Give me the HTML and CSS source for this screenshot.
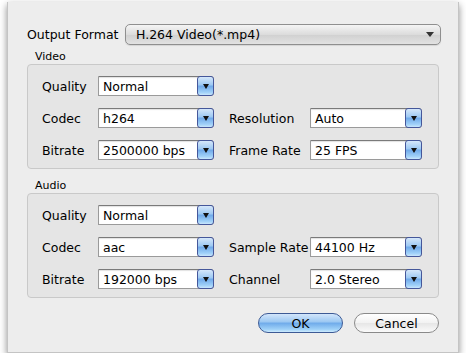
FILE: index.html
```html
<!DOCTYPE html>
<html lang="en">
<head>
    <meta charset="UTF-8">
    <title>Output Settings</title>
    <link rel="stylesheet" href="styles.css">
</head>
<body>
    <div class="window">
        <div class="format-row">
            <span class="label">Output Format</span>
            <div class="format-popup">
                <span>H.264 Video(*.mp4)</span>
                <span class="small-arrow"></span>
            </div>
        </div>

        <div class="group-title">Video</div>
        <div class="group">
            <span class="label">Quality</span>
            <div class="popup"><span class="value">Normal</span><span class="arrow"></span></div>
            <span></span><span></span>

            <span class="label">Codec</span>
            <div class="popup"><span class="value">h264</span><span class="arrow"></span></div>
            <span class="label">Resolution</span>
            <div class="popup"><span class="value">Auto</span><span class="arrow"></span></div>

            <span class="label">Bitrate</span>
            <div class="popup"><span class="value">2500000 bps</span><span class="arrow"></span></div>
            <span class="label">Frame Rate</span>
            <div class="popup"><span class="value">25 FPS</span><span class="arrow"></span></div>
        </div>

        <div class="group-title audio-title">Audio</div>
        <div class="group">
            <span class="label">Quality</span>
            <div class="popup"><span class="value">Normal</span><span class="arrow"></span></div>
            <span></span><span></span>

            <span class="label">Codec</span>
            <div class="popup"><span class="value">aac</span><span class="arrow"></span></div>
            <span class="label">Sample Rate</span>
            <div class="popup"><span class="value">44100 Hz</span><span class="arrow"></span></div>

            <span class="label">Bitrate</span>
            <div class="popup"><span class="value">192000 bps</span><span class="arrow"></span></div>
            <span class="label">Channel</span>
            <div class="popup"><span class="value">2.0 Stereo</span><span class="arrow"></span></div>
        </div>

        <div class="buttons">
            <button class="btn btn-default">OK</button>
            <button class="btn">Cancel</button>
        </div>
    </div>
</body>
</html>
```

FILE: styles.css
```css
* {
    margin: 0;
    padding: 0;
    box-sizing: border-box;
}

body {
    background: #ffffff;
    font-family: 'DejaVu Sans', sans-serif;
    font-size: 12.5px;
    color: #000;
}

.window {
    margin: 2px 0 0 7px;
    width: 452px;
    height: 351px;
    background: #ededed;
    border: 1px solid #c4c4c4;
    border-top: none;
    box-shadow: 0 3px 7px rgba(0, 0, 0, 0.45);
    padding: 22px 0 0 19px;
}

.label {
    white-space: nowrap;
}

.format-row {
    display: flex;
    align-items: center;
    height: 21px;
}

.format-row .label {
    width: 98px;
}

.format-popup {
    width: 316px;
    height: 21px;
    border: 1px solid #8f8f8f;
    border-radius: 5px;
    background: linear-gradient(#f4f4f4, #dcdcdc 50%, #d0d0d0 51%, #e2e2e2);
    display: flex;
    align-items: center;
    justify-content: space-between;
    padding: 0 6px 0 10px;
    box-shadow: 0 1px 1px rgba(0, 0, 0, 0.1);
}

.small-arrow {
    width: 0;
    height: 0;
    border-left: 4px solid transparent;
    border-right: 4px solid transparent;
    border-top: 5px solid #333;
}

.group-title {
    font-size: 11px;
    margin: 5px 0 0 8px;
    height: 13px;
    line-height: 13px;
}

.audio-title {
    margin-top: 10px;
}

.group {
    width: 412px;
    margin-top: 1px;
    background: #e5e5e5;
    border: 1px solid #c9c9c9;
    border-radius: 4px;
    display: grid;
    grid-template-columns: 56px 116px 96px 112px;
    grid-template-rows: repeat(3, 20px);
    row-gap: 12px;
    align-items: center;
    padding: 11px 0 8px 14px;
}

.group > span:nth-child(4n+3) {
    padding-left: 15px;
}

.popup {
    height: 20px;
    display: flex;
    background: #fff;
    border: 1px solid #9a9a9a;
    border-top-color: #7a7a7a;
    border-right: none;
    border-radius: 0 4px 4px 0;
    box-shadow: inset 0 1px 1px rgba(0, 0, 0, 0.12);
}

.popup .value {
    flex: 1;
    padding: 2px 0 0 4px;
    line-height: 16px;
}

.popup .arrow {
    width: 17px;
    margin: -1px 0;
    border: 1px solid #45579a;
    border-radius: 3px;
    background: linear-gradient(#d5e7fa, #9cc8f3 45%, #6fa9ea 50%, #9fd0f8 85%, #c8e6fd);
    display: flex;
    align-items: center;
    justify-content: center;
}

.popup .arrow::after {
    content: '';
    width: 0;
    height: 0;
    border-left: 3.5px solid transparent;
    border-right: 3.5px solid transparent;
    border-top: 5px solid #111;
}

.buttons {
    display: flex;
    gap: 11px;
    justify-content: flex-end;
    width: 412px;
    margin-top: 15px;
}

.btn {
    height: 20px;
    width: 85px;
    border-radius: 10px;
    border: 1px solid #8a8a8a;
    background: linear-gradient(#ffffff, #f2f2f2 50%, #e6e6e6 51%, #fafafa);
    font-family: 'DejaVu Sans', sans-serif;
    font-size: 12.5px;
    color: #000;
}

.btn-default {
    border-color: #3d5a95;
    background: linear-gradient(#d3e6fb, #9ac7f2 45%, #6eaaea 50%, #9fd1f8 85%, #cdebfd);
}
```
